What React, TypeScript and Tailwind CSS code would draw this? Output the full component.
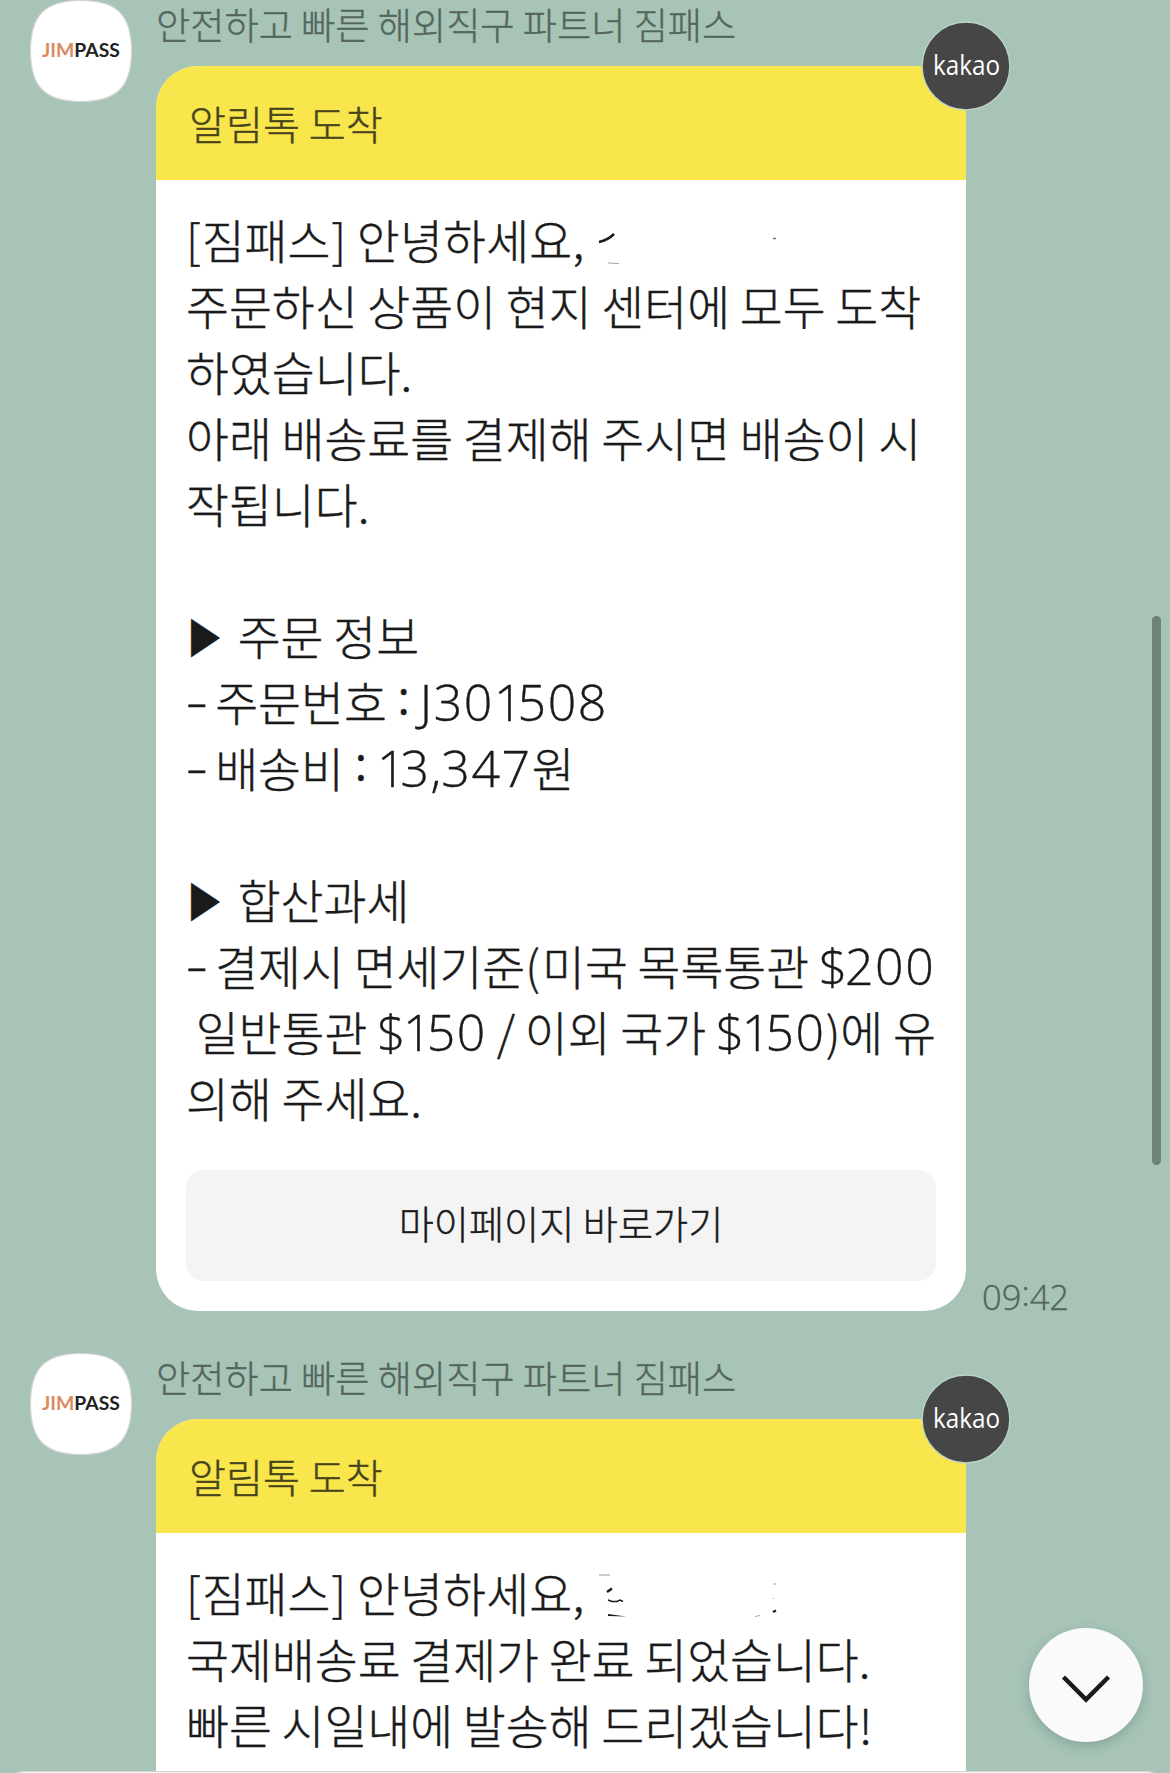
import { ReactNode } from "react"

function Avatar() {
  return (
    <svg width="104" height="104" viewBox="0 0 104 104" className="block">
      <path
        d="M52 1.5 C88 1.5 102.500 16 102.500 52 C102.500 88 88 102.500 52 102.500 C16 102.500 1.500 88 1.500 52 C1.500 16 16 1.500 52 1.500 Z"
        fill="#fff"
        stroke="#d3d6d4"
        strokeWidth="1.200"
      />
      <text x="13" y="57.500" textLength="78" lengthAdjust="spacingAndGlyphs" fontSize="19.500" fontWeight="700" fontFamily="Lato, sans-serif" fill="#222" strokeWidth="0">
        <tspan fill="#d98a60">JIM</tspan>PASS
      </text>
    </svg>
  )
}

function KakaoBadge() {
  return (
    <svg width="90" height="90" viewBox="0 0 90 90" className="absolute -top-[45px] -right-[45px]">
      <circle cx="45" cy="45" r="43.800" fill="#464646" stroke="#bcd6c8" strokeWidth="1.200" />
      <text x="12" y="53.700" textLength="67" lengthAdjust="spacingAndGlyphs" fontSize="27" fontWeight="500" fontFamily="'Open Sans', sans-serif" fill="#fff">
        kakao
      </text>
    </svg>
  )
}

// Latin letters and digits inside a Korean line
function L({ children }: { children: string }) {
  return (
    <span className="font-['Open_Sans'] text-[50px] leading-none tracking-[1.6px]">
      {children.split("").map((c, i) => (
        <span key={i} className={c === "1" ? "tracking-[-5px]" : c === "$" ? "tracking-[-2.5px]" : c === "," ? "tracking-normal" : ""}>
          {c}
        </span>
      ))}
    </span>
  )
}

function Dash() {
  return <span className="inline-block w-[19.5px] origin-left scale-x-135 align-[2px] font-['Open_Sans'] text-[50px] leading-none">-</span>
}

function Colon() {
  return <span className="inline-block w-[13.5px] pl-px align-[6px] font-['Open_Sans'] font-normal leading-none">:</span>
}

function Line({ children }: { children?: ReactNode }) {
  return <div className="h-[66px] leading-[66px] whitespace-pre">{children}</div>
}

function Arrow() {
  return (
    <span className="inline-block w-[42px] pl-[5px] leading-none">
      <span className="inline-block origin-left scale-x-[0.75] align-[4px] font-['DejaVu_Sans'] text-[50px] leading-none">▶</span>
    </span>
  )
}

function Greeting() {
  return (
    <Line>
      <span className="tracking-[1px]">[</span>짐패스<span className="ml-px tracking-[1px]">]</span> <span className="tracking-[0.2px]">안녕하세요,</span>
    </Line>
  )
}

function Message({ time, children }: { time?: ReactNode; children: ReactNode }) {
  return (
    <div className="flex items-start">
      <div className="ml-[29px] -mt-px w-[127px] shrink-0">
        <Avatar />
      </div>
      <div className="w-[810px] shrink-0">
        <div className="h-[66px] text-[37.2px] leading-[49px] whitespace-pre text-[#54665c]">안전하고 빠른 해외직구 파트너 짐패스</div>
        <div className="relative">
          <div className="overflow-hidden rounded-[42px] bg-white">
            <div className="flex h-[114px] items-center bg-[#f9e54c] pl-[33px] text-[40.2px] text-[#47431c]">알림톡 도착</div>
            <div className="px-[30px] pt-[26px] pb-[30px] text-[46.65px] [word-spacing:-0.6px] text-[#1a1a1a]">{children}</div>
          </div>
          <KakaoBadge />
        </div>
      </div>
      {time && <div className="mb-[-6px] ml-[16px] self-end font-['Open_Sans'] text-[34.5px] leading-[40px] text-[#54665c]">{time}</div>}
    </div>
  )
}

export default function App() {
  return (
    <div className="relative h-[1773px] w-[1170px] overflow-hidden bg-[#a7c4b7] font-['Noto_Sans_CJK_KR',sans-serif] font-light [-webkit-text-stroke:0.4px]">
      <div className="flex flex-col gap-[42px]">
        <Message time={<>09<span className="align-[4px] leading-none">:</span>42</>}>
          <Greeting />
          <Line>주문하신 상품이 현지 센터에 모두 도착</Line>
          <Line>하였습니다.</Line>
          <Line>아래 배송료를 결제해 주시면 배송이 시</Line>
          <Line>작됩니다.</Line>
          <Line />
          <Line><Arrow /> 주문 정보</Line>
          <Line><Dash /> 주문번호 <Colon /> <L>J301508</L></Line>
          <Line><Dash /> 배송비 <Colon /> <L>13,347</L>원</Line>
          <Line />
          <Line><Arrow /> 합산과세</Line>
          <Line><Dash /> 결제시 면세기준<span className="tracking-[2px]">(</span>미국 목록통관 <L>$200</L></Line>
          <Line> 일반통관 <L>$150</L> / 이외 국가 <L>$150</L>)에 유</Line>
          <Line>의해 주세요.</Line>
          <button className="mt-[40px] block h-[111px] w-full rounded-[18px] bg-[#f4f4f4] pb-[5px] text-[38.2px] text-[#1a1a1a]">마이페이지 바로가기</button>
        </Message>
        <Message>
          <Greeting />
          <Line>국제배송료 결제가 완료 되었습니다.</Line>
          <Line>빠른 시일내에 발송해 드리겠습니다!</Line>
          <Line />
        </Message>
      </div>

      {/* leftover strokes of the erased names */}
      <svg width="200" height="40" viewBox="590 230 200 40" className="absolute top-[230px] left-[590px]" fill="none" stroke="#1a1a1a">
        <path d="M599 242 Q608 240 614 234" strokeWidth="2.500" />
        <path d="M608 263 L619 263.500" strokeWidth="1.200" opacity="0.400" />
        <path d="M773 238.500 H776" strokeWidth="1.500" opacity="0.600" />
      </svg>
      <svg width="200" height="50" viewBox="590 1570 200 50" className="absolute top-[1570px] left-[590px]" fill="none" stroke="#1a1a1a">
        <path d="M599 1575 H610" strokeWidth="1.500" opacity="0.300" />
        <path d="M607 1592 L612 1588.500" strokeWidth="2.500" />
        <path d="M608 1600 L612 1601.500 L617 1601.500 L620 1600 L623 1601.500" strokeWidth="1.500" />
        <path d="M608 1614 L626 1616.500 L608 1616 Z" fill="#1a1a1a" stroke="none" />
        <path d="M755 1616.500 L760 1615.500 M773 1584 H776 M773 1598.500 H774" strokeWidth="1" opacity="0.400" />
        <path d="M773 1612 L776 1610.500" strokeWidth="2" />
      </svg>

      {/* scrollbar */}
      <div className="absolute top-[616px] left-[1152px] h-[549px] w-[9px] rounded-full bg-[#6e8278]" />

      <button className="absolute top-[1628px] left-[1029px] flex h-[114px] w-[114px] items-center justify-center rounded-full bg-[#fafafa] shadow-[0_4px_12px_rgba(50,90,75,0.28)]">
        <svg width="50" height="30" viewBox="0 0 50 30" fill="none" stroke="#1a1a1a" strokeWidth="4.500" className="mt-[7px]">
          <path d="M2.500 3 L25 25.500 L47.500 3" />
        </svg>
      </button>

      <div className="absolute top-[1771px] left-0 h-[60px] w-full rounded-[24px] border border-[#cfd6d2] bg-[#f6f6f6]" />
    </div>
  )
}
